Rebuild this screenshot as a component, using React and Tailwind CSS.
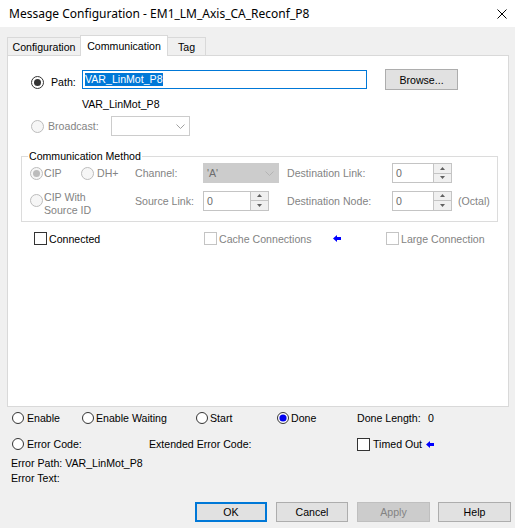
import React from "react";

const Radio13 = ({ checked = false, disabled = false }) => (
  <span
    className={`w-[13px] h-[13px] rounded-full border shrink-0 flex items-center justify-center ${
      disabled ? "border-[#bcbcbc] bg-[#f6f6f6]" : "border-[#333333] bg-white"
    }`}
  >
    {checked && (
      <span
        className={`w-[7px] h-[7px] rounded-full ${disabled ? "bg-[#bcbcbc]" : "bg-[#333333]"}`}
      />
    )}
  </span>
);

const Radio12 = ({ checked = false }) => (
  <svg width="12" height="12" viewBox="0 0 12 12" className="shrink-0">
    <circle cx="6" cy="6" r="5.5" fill="#ffffff" stroke="#333333" />
    {checked && <circle cx="6" cy="6" r="3.6" fill="#0000ee" />}
  </svg>
);

const Check = ({ disabled = false }) => (
  <span
    className={`block w-[13px] h-[13px] border shrink-0 bg-white ${
      disabled ? "border-[#c4c4c4]" : "border-[#333333]"
    }`}
  />
);

const Chevron = ({ color }) => (
  <svg width="9" height="5" viewBox="0 0 9 5">
    <polyline points="0.5,0.5 4.5,4.5 8.5,0.5" fill="none" stroke={color} strokeWidth="1" />
  </svg>
);

const Arrow = () => (
  <svg width="8" height="7" viewBox="0 0 8 7" className="shrink-0">
    <polygon points="0,3.5 4,0 4,2 8,2 8,5 4,5 4,7" fill="#0000ff" />
  </svg>
);

const Spin = ({ wide = false }) => (
  <div
    className={`flex h-[20px] border border-[#c4c4c4] bg-white ${wide ? "w-[66px]" : "w-[60px]"}`}
  >
    <span className="flex-1 pl-[3px] leading-[18px] text-[#6d6d6d]">0</span>
    <div className="w-[18px] flex flex-col border-l border-[#c4c4c4]">
      <div className="flex-1 bg-[#f0f0f0] border-b border-[#c4c4c4] flex items-center justify-center">
        <svg width="5" height="3" viewBox="0 0 5 3">
          <polygon points="2.5,0 5,3 0,3" fill="#606060" />
        </svg>
      </div>
      <div className="flex-1 bg-[#f0f0f0] flex items-center justify-center">
        <svg width="5" height="3" viewBox="0 0 5 3">
          <polygon points="0,0 5,0 2.5,3" fill="#606060" />
        </svg>
      </div>
    </div>
  </div>
);

export default function App() {
  return (
    <div className="w-[515px] h-[528px] bg-[#f0f0f0] flex flex-col font-['Liberation_Sans',Arial,sans-serif] text-[10.6px] leading-[14px] text-black overflow-hidden">
      {/* Title bar */}
      <div className="h-[27px] shrink-0 bg-white flex items-center justify-between pl-[9px] pr-[8px]">
        <span className="font-['Noto_Sans',sans-serif] text-[12px] leading-[16px]">
          Message Configuration - EM1_LM_Axis_CA_Reconf_P8
        </span>
        <svg width="10" height="10" viewBox="0 0 10 10">
          <path d="M0.5 0.5 L9.5 9.5 M9.5 0.5 L0.5 9.5" stroke="#000" strokeWidth="1" />
        </svg>
      </div>

      {/* Tabs */}
      <div className="h-[28px] shrink-0 flex items-end pl-[7px] relative z-10">
        <div className="w-[74px] h-[18px] border border-b-0 border-[#d9d9d9] bg-[#f0f0f0] flex items-center justify-center">
          Configuration
        </div>
        <div className="w-[88px] h-[21px] -ml-px -mb-px border border-b-0 border-[#d9d9d9] bg-white flex items-center justify-center">
          Communication
        </div>
        <div className="w-[39px] h-[18px] -ml-px border border-b-0 border-[#d9d9d9] bg-[#f0f0f0] flex items-center justify-center">
          Tag
        </div>
      </div>

      {/* Panel */}
      <div className="ml-[7px] mr-[6px] h-[352px] shrink-0 border border-[#d9d9d9] bg-white flex flex-col">
        {/* Path row */}
        <div className="mt-[13px] h-[21px] flex items-start">
          <span className="ml-[23px] mt-[7px]">
            <Radio13 checked />
          </span>
          <span className="ml-[7px] mt-[6px] w-[31px]">Path:</span>
          <div className="mt-[1px] w-[285px] h-[19px] border border-[#0078d7] flex items-center pl-[2px]">
            <span className="bg-[#0078d7] text-white leading-[13px]">VAR_LinMot_P8</span>
          </div>
          <div className="ml-[18px] w-[73px] h-[21px] border border-[#adadad] bg-[#e1e1e1] flex items-center justify-center">
            Browse...
          </div>
        </div>

        {/* Path label */}
        <div className="mt-[7px] ml-[74px]">VAR_LinMot_P8</div>

        {/* Broadcast row */}
        <div className="mt-[5px] h-[20px] flex items-center">
          <span className="ml-[23px]">
            <Radio13 disabled />
          </span>
          <span className="ml-[4px] w-[63px] text-[#838383]">Broadcast:</span>
          <div className="w-[79px] h-[20px] border border-[#cccccc] bg-white flex items-center justify-end pr-[4px]">
            <Chevron color="#a0a0a0" />
          </div>
        </div>

        {/* Communication Method group */}
        <fieldset className="mt-[13px] ml-[13px] w-[477px] border border-[#dcdcdc] pb-[10px]">
          <legend className="ml-[6px] px-[1px] leading-[14px]">Communication Method</legend>
          <div className="h-[20px] flex items-center">
            <div className="ml-[8px] w-[51px] flex items-center">
              <Radio13 checked disabled />
              <span className="ml-[1px] text-[#838383]">CIP</span>
            </div>
            <div className="w-[54px] flex items-center">
              <Radio13 disabled />
              <span className="ml-[3px] text-[#838383]">DH+</span>
            </div>
            <span className="w-[68px] text-[#838383]">Channel:</span>
            <div className="w-[76px] h-[20px] bg-[#cccccc] border border-[#cccccc] flex items-center justify-between pl-[3px] pr-[4px]">
              <span className="text-[#6d6d6d]">'A'</span>
              <Chevron color="#b4b4b4" />
            </div>
            <span className="ml-[8px] w-[105px] text-[#838383]">Destination Link:</span>
            <Spin />
          </div>
          <div className="mt-[7px] h-[21px] flex items-center">
            <div className="ml-[8px] w-[105px] flex items-center">
              <Radio13 disabled />
              <span className="ml-[1px] pt-[6px] leading-[13px] text-[#838383]">
                CIP With
                <br />
                Source ID
              </span>
            </div>
            <span className="w-[68px] text-[#838383]">Source Link:</span>
            <Spin wide />
            <span className="ml-[18px] w-[105px] text-[#838383]">Destination Node:</span>
            <Spin />
            <span className="ml-[6px] text-[#838383]">(Octal)</span>
          </div>
        </fieldset>

        {/* Connected row */}
        <div className="mt-[10px] h-[13px] flex items-center">
          <span className="ml-[26px]">
            <Check />
          </span>
          <span className="ml-[2px] w-[155px]">Connected</span>
          <Check disabled />
          <span className="ml-[2px] w-[114px] text-[#838383]">Cache Connections</span>
          <Arrow />
          <span className="ml-[45px]">
            <Check disabled />
          </span>
          <span className="ml-[2px] text-[#838383]">Large Connection</span>
        </div>
      </div>

      {/* Status rows */}
      <div className="mt-[4px] h-[14px] flex items-center">
        <div className="ml-[12px] w-[70px] flex items-center">
          <Radio12 />
          <span className="ml-[3px]">Enable</span>
        </div>
        <div className="w-[114px] flex items-center">
          <Radio12 />
          <span className="ml-[2px]">Enable Waiting</span>
        </div>
        <div className="w-[81px] flex items-center">
          <Radio12 />
          <span className="ml-[2px]">Start</span>
        </div>
        <div className="w-[80px] flex items-center">
          <Radio12 checked />
          <span className="ml-[2px]">Done</span>
        </div>
        <span className="w-[71px]">Done Length:</span>
        <span>0</span>
      </div>

      <div className="mt-[12px] h-[14px] flex items-center">
        <div className="ml-[12px] w-[137px] flex items-center">
          <Radio12 />
          <span className="ml-[3px]">Error Code:</span>
        </div>
        <span className="w-[208px]">Extended Error Code:</span>
        <Check />
        <span className="ml-[3px] w-[51px]">Timed Out</span>
        <span className="ml-[2px] flex">
          <Arrow />
        </span>
      </div>

      <div className="mt-[5px] ml-[11px]">Error Path: VAR_LinMot_P8</div>
      <div className="mt-[1px] ml-[11px]">Error Text:</div>

      {/* Buttons */}
      <div className="mt-[17px] ml-[195px] flex">
        <div className="w-[72px] h-[20px] border-2 border-[#0078d7] bg-[#e1e1e1] flex items-center justify-center">
          OK
        </div>
        <div className="ml-[9px] w-[72px] h-[20px] border border-[#adadad] bg-[#e1e1e1] flex items-center justify-center">
          Cancel
        </div>
        <div className="ml-[9px] w-[73px] h-[20px] border border-[#bfbfbf] bg-[#cccccc] text-[#838383] flex items-center justify-center">
          Apply
        </div>
        <div className="ml-[8px] w-[73px] h-[20px] border border-[#adadad] bg-[#e1e1e1] flex items-center justify-center">
          Help
        </div>
      </div>
    </div>
  );
}
